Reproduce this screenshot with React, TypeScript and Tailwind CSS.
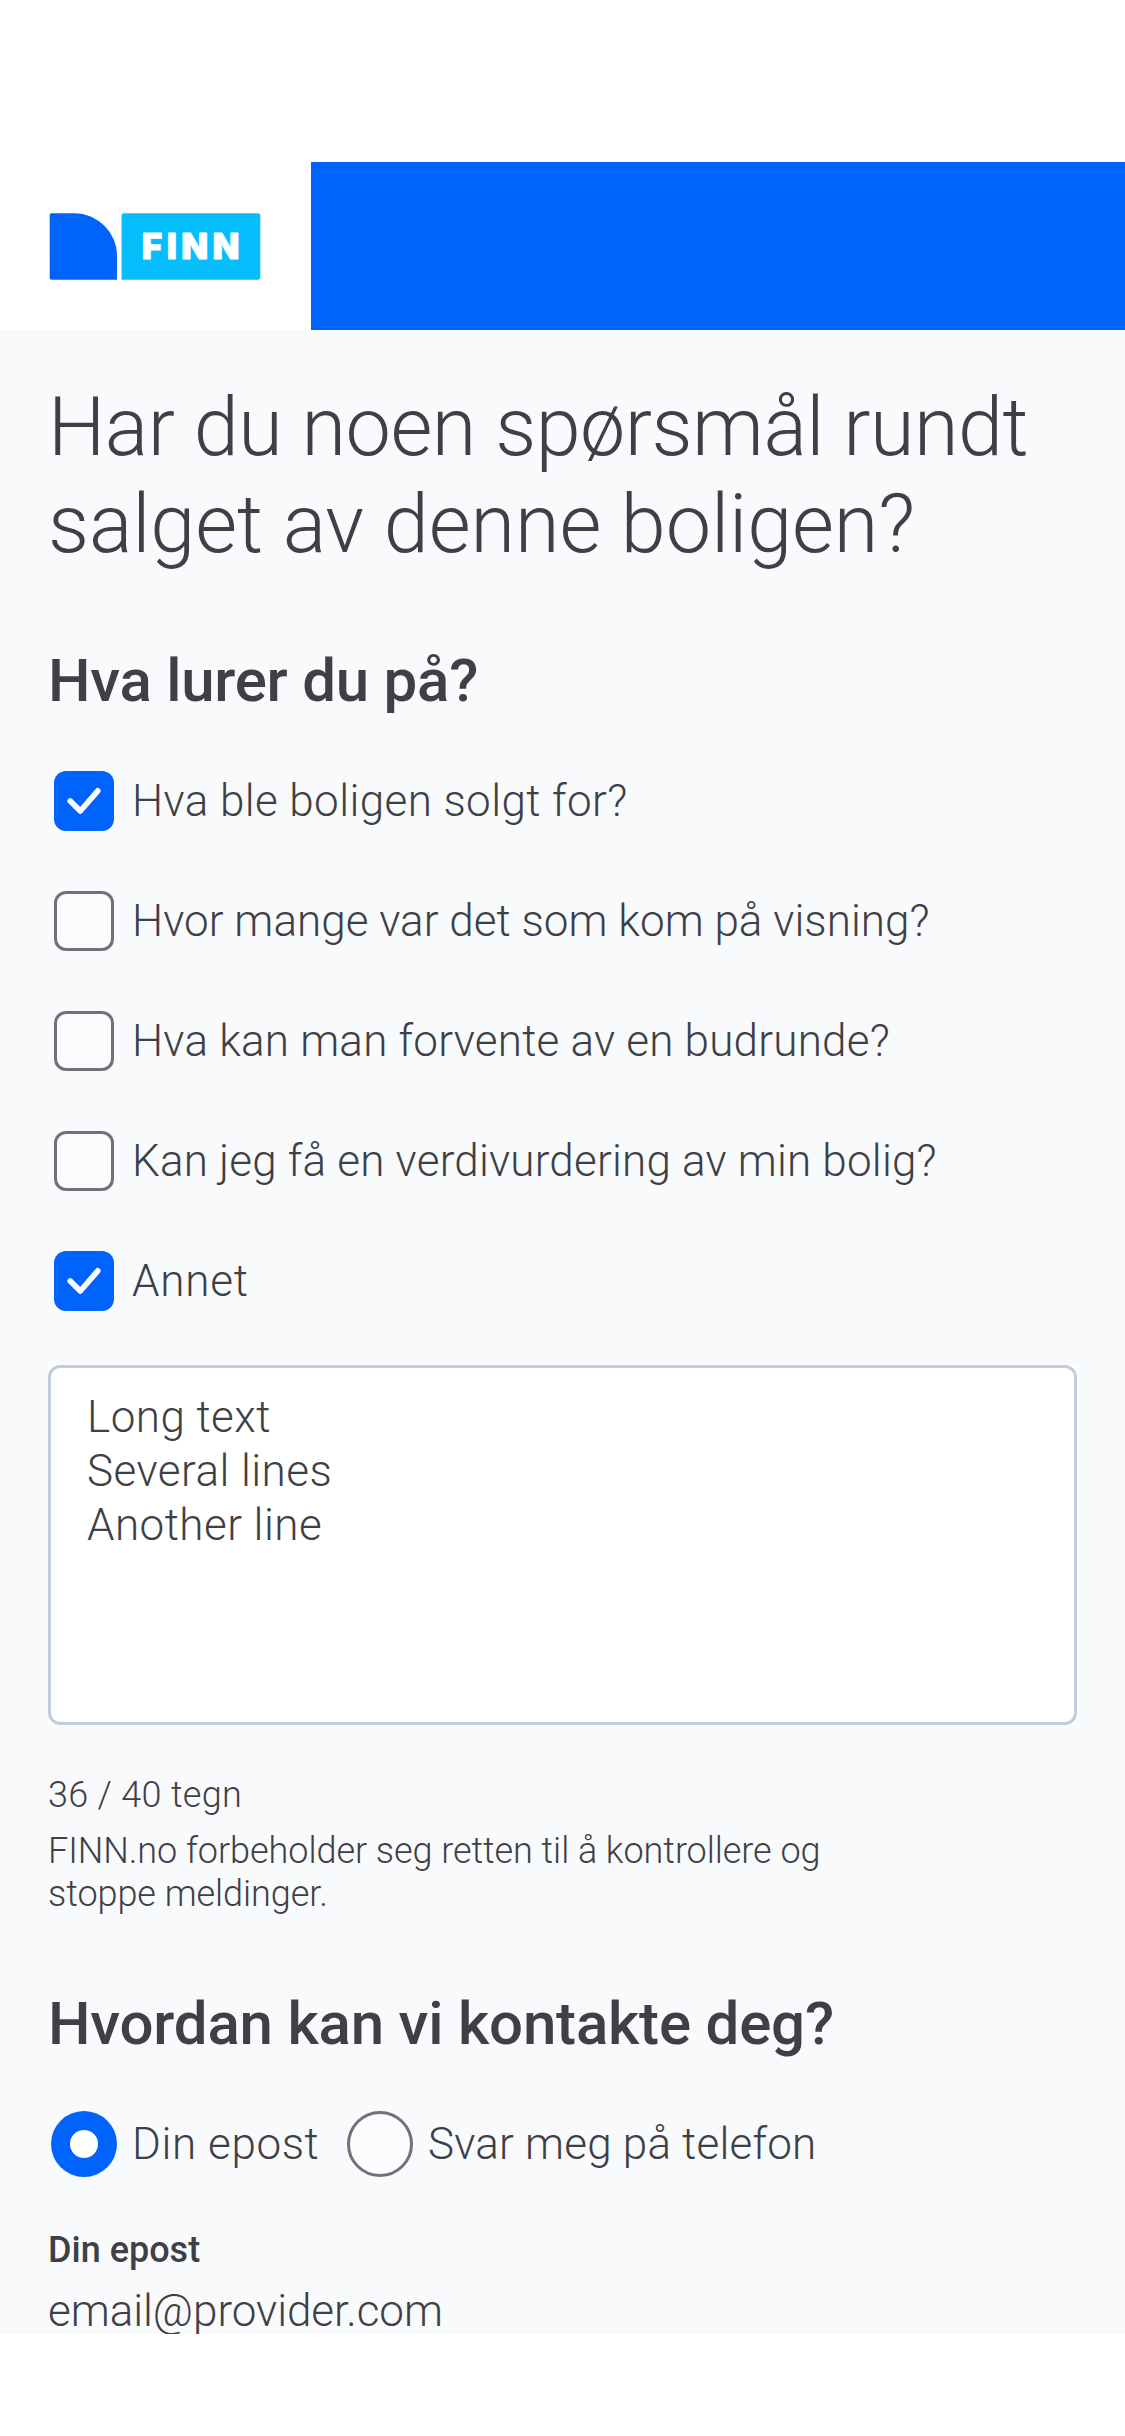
const questions = [
  { label: "Hva ble boligen solgt for?", checked: true, tracking: "tracking-[0.4px]" },
  { label: "Hvor mange var det som kom på visning?", checked: false, tracking: "tracking-[0.03px]" },
  { label: "Hva kan man forvente av en budrunde?", checked: false, tracking: "tracking-[0.22px]" },
  { label: "Kan jeg få en verdivurdering av min bolig?", checked: false, tracking: "tracking-[0.2px]" },
  { label: "Annet", checked: true, tracking: "tracking-[0.8px]" },
];

function Logo() {
  return (
    <svg className="ml-[49px] h-[68px] w-[213px]" viewBox="0 0 213 68">
      <path
        d="M2.5 0.3H25C48.5 0.3 68 19.5 68 43V66.7H2.5Q0.7 66.7 0.7 65V2.2Q0.7 0.3 2.5 0.3Z"
        fill="#0063fb"
      />
      <path
        d="M75 0.3H209Q211.3 0.3 211.3 2.4V64.6Q211.3 66.7 209 66.7H72.6V2.4Q72.6 0.3 75 0.3Z"
        fill="#06befb"
      />
      <text
        x="92.8"
        y="46.3"
        fill="#fff"
        stroke="#fff"
        strokeWidth="0.8"
        strokeLinejoin="round"
        fontFamily="Inter, sans-serif"
        fontWeight="900"
        fontSize="35"
        letterSpacing="4.4"
      >
        FINN
      </text>
    </svg>
  );
}

function Checkbox({ checked }: { checked: boolean }) {
  return checked ? (
    <span className="flex size-[60px] shrink-0 rounded-[12px] bg-[#0063fb]">
      <svg className="size-[60px]" viewBox="0 0 60 60" fill="none">
        <path
          d="M16.2 30L26.3 40L43.8 19.8"
          stroke="#fff"
          strokeWidth="5.6"
          strokeLinecap="round"
          strokeLinejoin="round"
        />
      </svg>
    </span>
  ) : (
    <span className="size-[60px] shrink-0 rounded-[12px] border-[3px] border-zinc-500 bg-[#fbfcfe]" />
  );
}

export default function App() {
  return (
    <div className="flex h-[2436px] w-[1125px] flex-col bg-white font-['Roboto',sans-serif] font-light text-zinc-700">
      <header className="mt-[162px] flex h-[168px] shrink-0">
        <div className="flex w-[311px] items-center pt-[2px]">
          <Logo />
        </div>
        <div className="flex-1 bg-[#0063fb]" />
      </header>

      <main className="h-[2004px] shrink-0 overflow-hidden bg-[#f9fafc] px-12 pt-[49px]">
        <h1 className="whitespace-nowrap text-[81px] leading-[97px]">
          <span className="block tracking-[-0.5px]">Har du noen spørsmål rundt</span>
          <span className="block tracking-[-0.1px]">salget av denne boligen?</span>
        </h1>

        <h2 className="mt-[69px] text-[60px] leading-[78px] font-medium tracking-[-0.25px]">
          Hva lurer du på?
        </h2>
        <div className="mt-[21px]">
          {questions.map((q) => (
            <label key={q.label} className="flex h-[120px] items-center gap-[18px] pl-1.5">
              <Checkbox checked={q.checked} />
              <span className={"whitespace-nowrap text-[44px] " + q.tracking}>{q.label}</span>
            </label>
          ))}
        </div>

        <div className="mt-6 h-[360px] bg-white">
          <div className="h-full rounded-[12px] border-[3px] border-[#c3ccd9] pt-[22px] pl-9 text-[44px] leading-[54px] tracking-[0.45px]">
            <p>Long text</p>
            <p>Several lines</p>
            <p>Another line</p>
          </div>
        </div>

        <p className="mt-[49px] text-[36px] leading-[42px] tracking-[0.3px]">36 / 40 tegn</p>
        <p className="mt-[14px] whitespace-nowrap text-[36px] leading-[43px] tracking-[-0.05px]">
          FINN.no forbeholder seg retten til å kontrollere og
          <br />
          stoppe meldinger.
        </p>

        <h2 className="mt-[69px] text-[60px] leading-[78px] font-medium tracking-[-0.2px]">
          Hvordan kan vi kontakte deg?
        </h2>
        <div className="mt-12 flex h-[66px] items-center pl-[3px] text-[44px]">
          <span className="flex size-[66px] items-center justify-center rounded-full bg-[#0063fb]">
            <span className="size-7 rounded-full bg-white" />
          </span>
          <span className="ml-[15px] w-[215px] tracking-[0.6px]">Din epost</span>
          <span className="size-[66px] rounded-full border-[3px] border-zinc-500 bg-[#fbfcfe]" />
          <span className="ml-[15px] tracking-[0.2px]">Svar meg på telefon</span>
        </div>

        <p className="mt-[52px] text-[36px] leading-[42px] font-medium">Din epost</p>
        <p className="mt-[13px] text-[44px] leading-[54px] tracking-[-0.05px]">email@provider.com</p>
      </main>
    </div>
  );
}
